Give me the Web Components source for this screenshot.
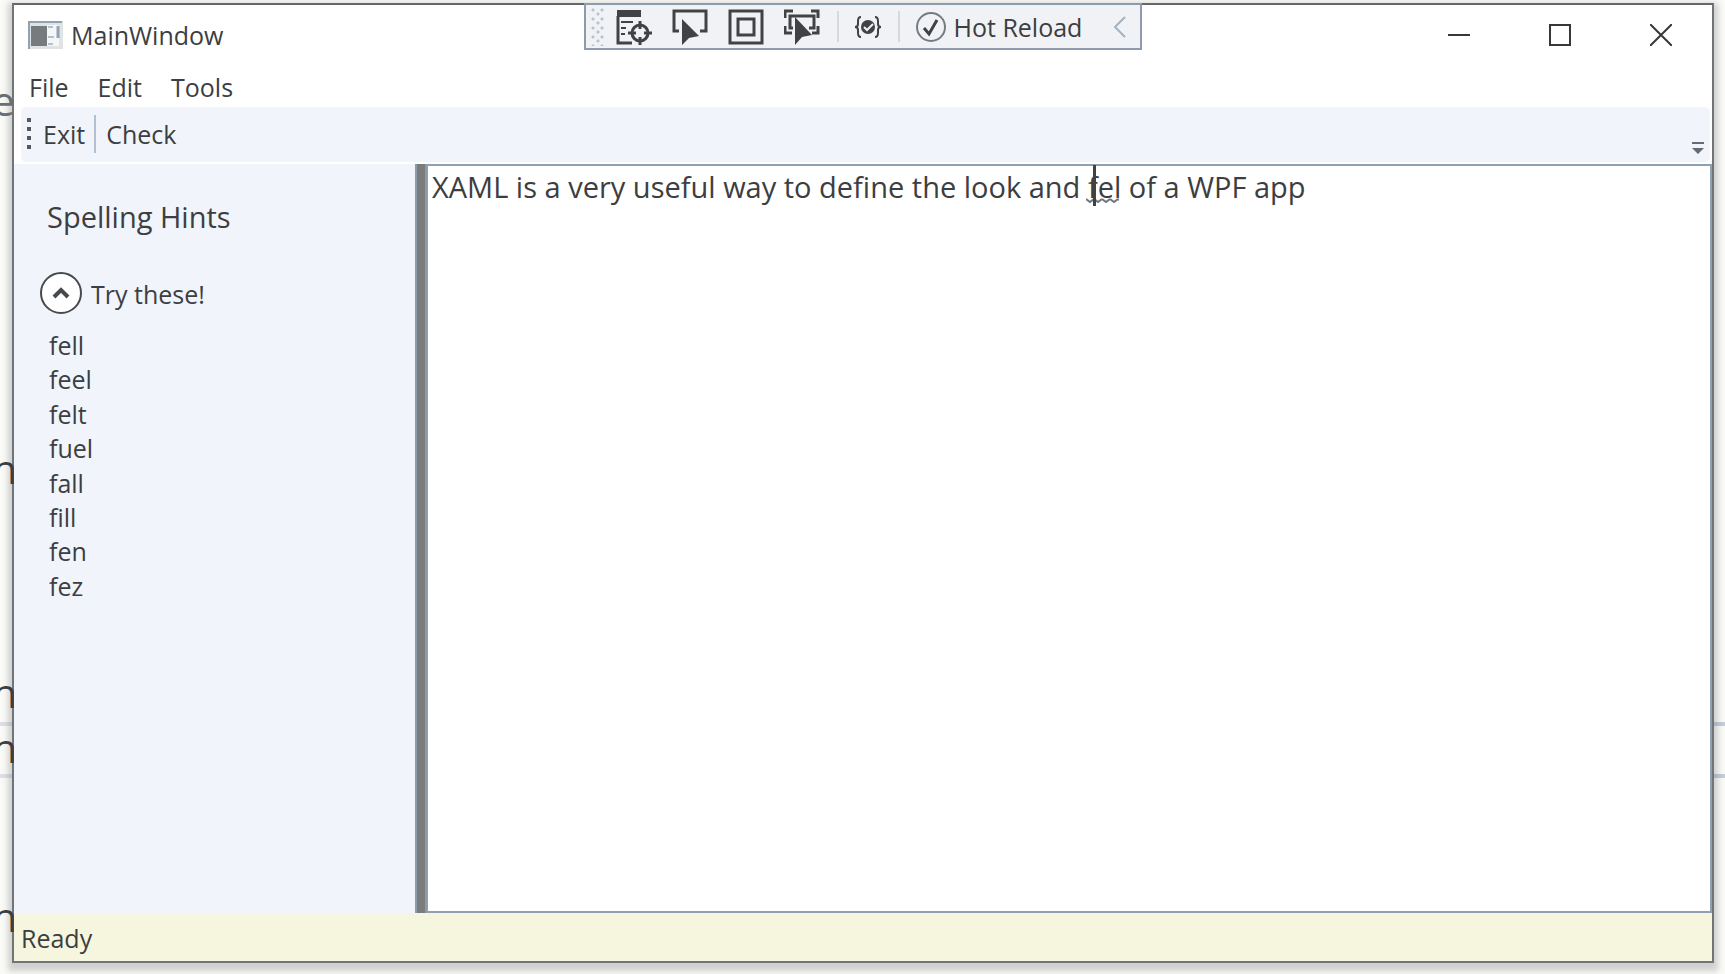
<!DOCTYPE html>
<html lang="en">
<head>
<meta charset="utf-8">
<title>MainWindow</title>
<style>
  html, body { height: 100%; margin: 0; }
  body { font: 25px/34px "Open Sans", "Noto Sans", sans-serif; color: #3c3e41; background: #fafaf7; overflow: hidden; }
</style>
</head>
<body>
<desktop-area>
  <main-window>
    <title-bar slot="title" caption="MainWindow"></title-bar>
    <menu-bar slot="menu">
      <button>File</button><button>Edit</button><button>Tools</button>
    </menu-bar>
    <tool-bar slot="tools">
      <button>Exit</button><hr><button>Check</button>
    </tool-bar>
    <hints-panel slot="side" heading="Spelling Hints" label="Try these!">
      <li>fell</li><li>feel</li><li>felt</li><li>fuel</li><li>fall</li><li>fill</li><li>fen</li><li>fez</li>
    </hints-panel>
    <text-editor slot="editor" value="XAML is a very useful way to define the look and fel of a WPF app" misspelt="fel"></text-editor>
    <status-bar slot="status">Ready</status-bar>
  </main-window>
  <debug-bar></debug-bar>
</desktop-area>

<script>
const define = (name, html, init) => {
  const template = document.createElement('template');
  template.innerHTML = html;
  customElements.define(name, class extends HTMLElement {
    constructor() {
      super();
      this.attachShadow({ mode: 'open' }).append(template.content.cloneNode(true));
    }
    connectedCallback() { if (init) init.call(this, this.shadowRoot); }
  });
};

/* Desktop: pieces of the page behind the window show at its edges. */
define('desktop-area', `
<style>
  :host { display: flex; position: relative; height: 100%; box-sizing: border-box; padding: 3px 11px 11px 12px; overflow: hidden; }
  ::slotted(main-window) { flex: 1; }
  .behind { position: absolute; inset: 0; overflow: hidden; }
  .line { position: absolute; left: 0; right: 0; height: 4px; background: linear-gradient(90deg, #dcdfe3 20px, #c3cddb 20px); }
  .l1 { top: 722px; } .l2 { top: 774px; }
  .edge { position: absolute; inset: 0 auto 0 0; width: 14px; overflow: hidden; z-index: 2; font-size: 41px; line-height: 40px; }
  .edge span { position: absolute; left: -8px; }
</style>
<div class="behind"><div class="line l1"></div><div class="line l2"></div></div>
<div class="edge" aria-hidden="true">
  <span style="top:80px;color:#6a6f75">e</span>
  <span style="top:448px">n</span>
  <span style="top:672px">n</span>
  <span style="top:727px">n</span>
  <span style="top:896px">n</span>
</div>
<slot></slot>`);

define('main-window', `
<style>
  :host { display: flex; flex-direction: column; position: relative; min-width: 0; background: #fff; border: 2px solid #70757a; border-top-color: #676767; box-shadow: 0 4px 6px 4px rgba(70,75,80,.24); }
  .body { flex: 1; display: grid; grid-template-columns: 401px 12px 1fr; min-height: 0; }
  .split { background: #7b7b7b; border: solid #8c9cad; border-width: 0 2px; box-sizing: border-box; }
</style>
<slot name="title"></slot><slot name="menu"></slot><slot name="tools"></slot>
<div class="body"><slot name="side"></slot><div class="split"></div><slot name="editor"></slot></div>
<slot name="status"></slot>`);

define('title-bar', `
<style>
  :host { display: flex; align-items: center; height: 60px; padding: 0 1px 0 14px; }
  h1 { flex: 1; margin: 0 0 0 8px; font: inherit; }
  button { width: 101px; height: 60px; padding: 0; border: 0; background: none; color: #36383b; }
  svg { display: block; margin: auto; fill: none; stroke: currentColor; stroke-width: 2; }
</style>
<svg style="margin:0" width="35" height="28" viewBox="0 0 35 28" stroke="none" aria-hidden="true">
  <rect width="35" height="28" fill="#e1e2e3" stroke="none"/>
  <path d="M1 28V1H34" stroke="#8fa3b5"/>
  <rect x="3" y="5" width="16" height="20" fill="#777b7e" stroke="none"/>
  <path d="M19 4H31V25H19Z" fill="#f5f6f7" stroke="none"/>
  <path d="M30 5V17" stroke="#8fa3b5" stroke-width="3"/>
  <path d="M20 6H25M20 16H26M20 23H25" stroke="#b3c0cb"/>
</svg>
<h1></h1>
<button aria-label="Minimize"><svg width="22" height="22"><path d="M0 11H22"/></svg></button>
<button aria-label="Maximize"><svg width="22" height="22"><rect x="1" y="1" width="20" height="20"/></svg></button>
<button aria-label="Close"><svg width="22" height="22"><path d="M0 0L22 22M22 0L0 22"/></svg></button>`,
function (root) { root.querySelector('h1').textContent = this.getAttribute('caption'); });

define('menu-bar', `
<style>
  :host { display: flex; align-items: flex-start; height: 42px; padding: 5px 0 0 14px; gap: 28px; box-sizing: border-box; }
  ::slotted(button) { border: 0; padding: 0 0 0 1px; background: none; font: inherit; color: inherit; }
</style><slot></slot>`);

define('tool-bar', `
<style>
  :host { display: flex; align-items: center; height: 53px; margin: 0 2px 2px 7px; padding: 0 6px 2px 6px; background: #f1f4fb; border-radius: 5px; }
  ::slotted(button) { border: 0; padding: 0; background: none; font: inherit; color: inherit; }
  ::slotted(hr) { width: 2px; height: 38px; margin: 0 10px 0 9px; border: 0; background: #b2c0d0; }
  .grip { width: 4px; height: 31px; margin-right: 12px; background: repeating-linear-gradient(#55595f 0 4px, transparent 4px 9px); }
  .more { margin-left: auto; align-self: flex-end; padding: 0 0 5px; border: 0; background: none; }
  svg { display: block; }
</style>
<span class="grip"></span><slot></slot>
<button class="more" aria-label="More"><svg width="12" height="14" fill="#656c73"><path d="M0 1H12V3H0ZM0 7H12L6 13Z"/></svg></button>`);

define('hints-panel', `
<style>
  :host { display: block; background: #f1f4fb; padding: 33px 26px 0; }
  h2 { margin: 0 0 0 7px; font: inherit; font-size: 29px; line-height: 40px; }
  button { display: flex; align-items: center; gap: 9px; margin: 36px 0 13px; padding: 0; border: 0; background: none; font: inherit; color: inherit; }
  ul { display: grid; grid-auto-rows: 1fr; height: 275px; margin: 0 0 0 9px; padding: 0; list-style: none; }
</style>
<h2></h2>
<button aria-expanded="true">
  <svg width="42" height="42" fill="#fff" stroke="#46494d" stroke-width="2"><circle cx="21" cy="20" r="20"/><path d="M14 24L21 17L28 24" fill="none" stroke-width="4"/></svg>
  <span></span>
</button>
<ul><slot></slot></ul>`,
function (root) {
  root.querySelector('h2').textContent = this.getAttribute('heading');
  root.querySelector('button span').textContent = this.getAttribute('label');
  root.querySelector('svg').style.overflow = 'visible';
});

define('text-editor', `
<style>
  :host { display: flex; position: relative; font-size: 29px; }
  textarea { flex: 1; margin: 0; padding: 1px 4px; border: 2px solid #8fa0b3; border-left-width: 1px; outline: 0; resize: none; background: #fff; font: inherit; line-height: 40px; color: inherit; }
  .wave, .caret { position: absolute; pointer-events: none; }
  .wave { top: 34px; height: 5px; }
  .wave svg { display: block; width: 100%; height: 5px; }
  .caret { top: 1px; width: 3px; height: 41px; background: #404245; }
</style>
<textarea spellcheck="false" aria-label="Document"></textarea>
<span class="wave"><svg><defs><pattern id="w" width="8" height="5" patternUnits="userSpaceOnUse"><path d="M0 1L4 4L8 1" fill="none" stroke="#6f757b" stroke-width="2"/></pattern></defs><rect width="100%" height="5" fill="url(#w)"/></svg></span>
<span class="caret"></span>`,
function (root) {
  const area = root.querySelector('textarea'), wave = root.querySelector('.wave'), caret = root.querySelector('.caret');
  const word = this.getAttribute('misspelt');
  area.value = this.getAttribute('value');
  const before = area.value.slice(0, area.value.indexOf(word));
  const pen = document.createElement('canvas').getContext('2d');
  pen.font = '29px "Open Sans", "Noto Sans", sans-serif';
  const left = 3 + Math.round(pen.measureText(before).width);
  wave.style.left = left + 'px';
  wave.style.width = Math.round(pen.measureText(word).width) + 'px';
  caret.style.left = left + Math.round(pen.measureText(word[0]).width) - 3 + 'px';
});

define('status-bar', `
<style>:host { display: flex; align-items: center; height: 46px; padding: 2px 0 0 7px; background: #f6f6de; }</style>
<slot></slot>`);

define('debug-bar', `
<style>
  :host { display: flex; align-items: center; position: absolute; top: 3px; left: 50%; transform: translateX(-50%); width: 558px; height: 47px; box-sizing: border-box; padding: 0 14px 0 5px; border: 2px solid #8d9bab; background: #f0f2f5; z-index: 3; }
  .grip { width: 13px; height: 38px; margin-right: 12px; background: radial-gradient(circle at 2px 2px, #b7c3cf 1px, transparent 2px) 0 0 / 9px 9px, radial-gradient(circle at 2px 2px, #b7c3cf 1px, transparent 2px) 5px 4px / 9px 9px; }
  button { display: flex; align-items: center; padding: 0; border: 0; background: none; font: inherit; color: inherit; }
  .icon { margin-right: 20px; }
  .hot { gap: 7px; }
  .fold { margin-left: auto; }
  i { width: 2px; height: 31px; background: #d5d8dc; }
  .s1 { margin: 0 15px 0 -3px; } .s2 { margin: 0 15px 0 16px; }
  svg { display: block; fill: none; stroke: #404245; stroke-width: 3; }
  .f { fill: #404245; stroke: none; }
</style>
<span class="grip"></span>
<button class="icon" aria-label="Live Visual Tree"><svg width="36" height="36">
  <rect class="f" x="1" y="1" width="24" height="7"/><path d="M2 7V34H16"/><path d="M5 13H17M5 19H10M5 25H9" stroke-width="2"/>
  <circle cx="24" cy="24" r="8"/><path d="M24 12V20M24 28V36M12 24H20M28 24H36"/>
</svg></button>
<button class="icon" aria-label="Select Element"><svg width="36" height="36">
  <path d="M7 22H2V2H34V22H28"/><path class="f" d="M10 10V36L17 29L27 27Z"/>
</svg></button>
<button class="icon" aria-label="Display Layout Adorners"><svg width="36" height="36">
  <rect x="2" y="2" width="32" height="32"/><rect x="10" y="10" width="16" height="16"/>
</svg></button>
<button class="icon" aria-label="Track Focused Element"><svg width="36" height="36">
  <path d="M1 9V2H9M27 2H34V9M1 17V24H8M28 24H34V17"/><path d="M9 19H6V7H30V19H25"/><path class="f" d="M11 8V36L18 28L28 26Z"/>
</svg></button>
<i class="s1"></i>
<button aria-label="Binding Failures"><svg width="28" height="24" style="stroke-width:2">
  <path d="M7 2Q4 2 4 6V9Q4 12 1 12Q4 12 4 15V18Q4 22 7 22M21 2Q24 2 24 6V9Q24 12 27 12Q24 12 24 15V18Q24 22 21 22"/>
  <circle class="f" cx="14" cy="12" r="7"/><path d="M10 12L13 15L19 9" stroke="#f0f2f5"/>
</svg></button>
<i class="s2"></i>
<button class="hot"><svg width="32" height="32"><circle cx="16" cy="16" r="14" stroke="#747b82" stroke-width="2"/><path d="M9 17L14 23L22 9"/></svg>Hot Reload</button>
<button class="fold" aria-label="Collapse"><svg width="13" height="22" style="stroke-width:2"><path d="M12 1L2 11L12 21" stroke="#a4b2c0"/></svg></button>`);
</script>
</body>
</html>
